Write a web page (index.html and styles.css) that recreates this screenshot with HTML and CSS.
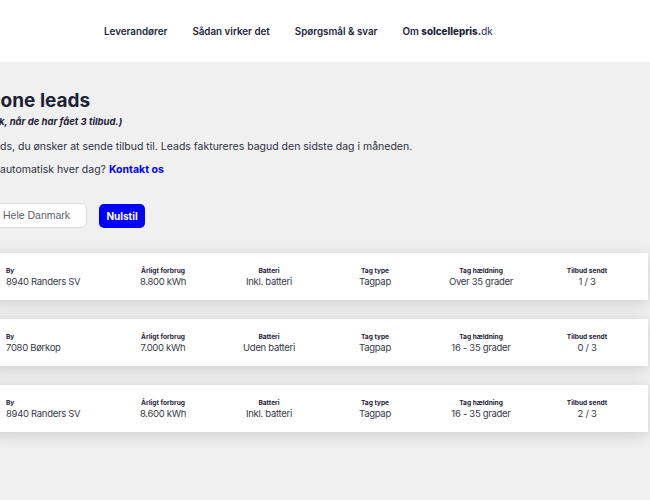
FILE: index.html
```html
<!DOCTYPE html>
<html lang="da">
<head>
<meta charset="utf-8">
<link rel="stylesheet" href="styles.css">
</head>
<body>
<header class="topbar">
  <nav class="nav">
    <a class="nav-link">Leverandører</a>
    <a class="nav-link">Sådan virker det</a>
    <a class="nav-link">Spørgsmål &amp; svar</a>
    <a class="nav-link">Om <b>solcellepris.</b><span class="dk">dk</span></a>
  </nav>
</header>
<main class="main">
  <section class="intro">
    <h1 class="title"><span class="clip">Zone leads</span></h1>
    <p class="note"><span class="clip">k, når de har fået 3 tilbud.)</span></p>
    <p class="text"><span class="clip">ds, du ønsker at sende tilbud til. Leads faktureres bagud den sidste dag i måneden.</span></p>
    <p class="text"><span class="clip">automatisk hver dag? <a class="link">Kontakt os</a></span></p>
    <div class="filters">
      <div class="select">Hele Danmark</div>
      <button class="btn">Nulstil</button>
    </div>
  </section>
  <section class="list">
    <div class="card">
      <div class="cell first"><div class="lbl">By</div><div class="val">8940 Randers SV</div></div>
      <div class="cell"><div class="lbl">Årligt forbrug</div><div class="val">8.800 kWh</div></div>
      <div class="cell"><div class="lbl">Batteri</div><div class="val">Inkl. batteri</div></div>
      <div class="cell"><div class="lbl">Tag type</div><div class="val">Tagpap</div></div>
      <div class="cell"><div class="lbl">Tag hældning</div><div class="val">Over 35 grader</div></div>
      <div class="cell"><div class="lbl">Tilbud sendt</div><div class="val">1 / 3</div></div>
    </div>
    <div class="card">
      <div class="cell first"><div class="lbl">By</div><div class="val">7080 Børkop</div></div>
      <div class="cell"><div class="lbl">Årligt forbrug</div><div class="val">7.000 kWh</div></div>
      <div class="cell"><div class="lbl">Batteri</div><div class="val">Uden batteri</div></div>
      <div class="cell"><div class="lbl">Tag type</div><div class="val">Tagpap</div></div>
      <div class="cell"><div class="lbl">Tag hældning</div><div class="val">16 - 35 grader</div></div>
      <div class="cell"><div class="lbl">Tilbud sendt</div><div class="val">0 / 3</div></div>
    </div>
    <div class="card">
      <div class="cell first"><div class="lbl">By</div><div class="val">8940 Randers SV</div></div>
      <div class="cell"><div class="lbl">Årligt forbrug</div><div class="val">8.600 kWh</div></div>
      <div class="cell"><div class="lbl">Batteri</div><div class="val">Inkl. batteri</div></div>
      <div class="cell"><div class="lbl">Tag type</div><div class="val">Tagpap</div></div>
      <div class="cell"><div class="lbl">Tag hældning</div><div class="val">16 - 35 grader</div></div>
      <div class="cell"><div class="lbl">Tilbud sendt</div><div class="val">2 / 3</div></div>
    </div>
  </section>
</main>
</body>
</html>
```
FILE: styles.css
```css
* { box-sizing: border-box; }
html, body { margin: 0; padding: 0; }
body {
  width: 650px;
  height: 500px;
  overflow: hidden;
  background: #f0f0f0;
  font-family: Inter, "Open Sans", sans-serif;
  color: #1e2235;
}
.topbar {
  height: 62px;
  background: #fff;
  display: flex;
  align-items: center;
}
.nav {
  display: flex;
  gap: 25px;
  margin-left: 104px;
}
.nav-link {
  font-size: 9.8px;
  font-weight: 600;
  color: #1d1f3a;
  white-space: nowrap;
}
.nav-link b { font-weight: 800; }
.nav-link .dk { font-weight: 400; color: #2a2c48; }
.main { padding-top: 24px; }
.intro { display: flex; flex-direction: column; }
.title {
  margin: 0;
  font-size: 19px;
  font-weight: 700;
  line-height: 29px;
  color: #1e2235;
  white-space: nowrap;
}
.clip { display: block; }
.title .clip { margin-left: -12px; }
.note {
  margin: 0;
  font-size: 9.5px;
  font-weight: 700;
  font-style: italic;
  line-height: 14px;
  color: #1e2235;
  white-space: nowrap;
}
.note .clip { margin-left: -1px; }
.text {
  margin: 10px 0 0;
  font-size: 10.5px;
  line-height: 15px;
  color: #2d3040;
  white-space: nowrap;
}
.text + .text { margin-top: 8px; }
.link { color: #0000ff; font-weight: 700; }
.filters {
  display: flex;
  align-items: center;
  gap: 12px;
  margin-top: 26px;
  margin-left: -20px;
}
.select {
  width: 107px;
  height: 25px;
  background: #fff;
  border: 1px solid #dcdcdc;
  border-radius: 6px;
  padding-left: 22px;
  font-family: "Liberation Sans", Arial, sans-serif;
  font-size: 10.5px;
  line-height: 23px;
  color: #5f6068;
}
.btn {
  width: 46px;
  height: 24px;
  background: #0000ff;
  border: none;
  border-radius: 5px;
  color: #fff;
  font-family: Inter, sans-serif;
  font-size: 10px;
  font-weight: 700;
  padding: 0;
}
.list {
  display: flex;
  flex-direction: column;
  gap: 19px;
  margin-top: 25px;
}
.card {
  margin-left: -10px;
  width: 658px;
  height: 47px;
  background: #fff;
  box-shadow: 0 3px 16px rgba(0,0,0,0.15);
  padding: 13px 8px 0 14px;
  display: grid;
  grid-template-columns: repeat(6, 106px);
}
.cell { text-align: center; white-space: nowrap; }
.cell.first { text-align: left; padding-left: 2px; }
.lbl {
  font-size: 6.6px;
  font-weight: 700;
  line-height: 10px;
  color: #1e2235;
}
.val {
  font-size: 9.5px;
  letter-spacing: -0.3px;
  line-height: 12px;
  color: #363a48;
}
```
